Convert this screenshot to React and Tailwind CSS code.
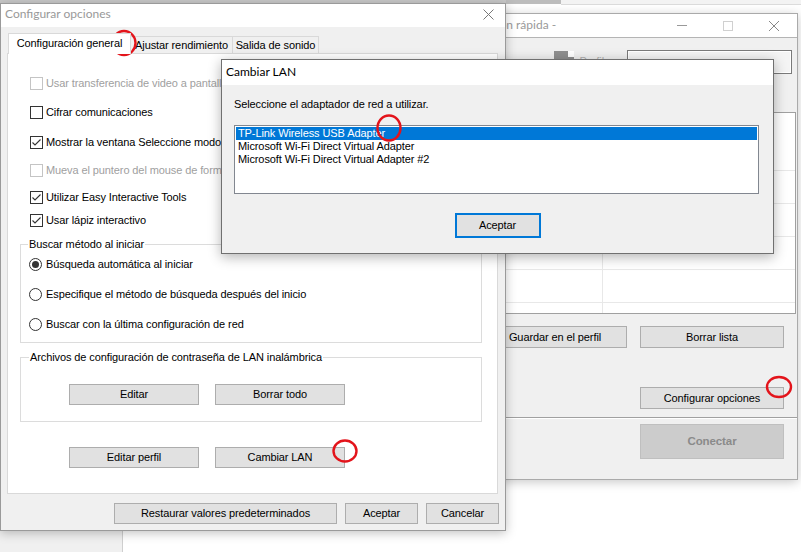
import React from 'react';

const title = "font-['Lato',sans-serif] text-[12px] tracking-normal";

function Btn({ className = '', children }) {
  return (
    <div className={`flex items-center justify-center border border-[#adadad] bg-[#e1e1e1] leading-none text-black ${className}`}>
      {children}
    </div>
  );
}

function Check({ checked, disabled, label, className = '' }) {
  return (
    <div className={`flex h-[13px] items-center ${className}`}>
      <span className={`flex h-[13px] w-[13px] shrink-0 items-center justify-center border bg-white ${disabled ? 'border-[#c4c4c4]' : 'border-[#333333]'}`}>
        {checked && (
          <svg width="11" height="11" viewBox="0 0 11 11">
            <path d="M1.5 5.5 L4 8 L9.5 2.5" stroke="#333" fill="none" strokeWidth="1.1" />
          </svg>
        )}
      </span>
      <span className={`ml-[3px] whitespace-nowrap leading-none ${disabled ? 'text-[#a0a0a0]' : 'text-black'}`}>{label}</span>
    </div>
  );
}

function Radio({ selected, label, className = '' }) {
  return (
    <div className={`flex h-[13px] items-center ${className}`}>
      <span className="flex h-[13px] w-[13px] shrink-0 items-center justify-center rounded-full border border-[#333333] bg-white">
        {selected && <span className="h-[7px] w-[7px] rounded-full bg-[#333333]" />}
      </span>
      <span className="ml-[4px] whitespace-nowrap leading-none text-black">{label}</span>
    </div>
  );
}

function Mark({ className, rx, ry }) {
  return (
    <svg className={`absolute ${className}`} width="28" height="30" viewBox="0 0 28 30">
      <ellipse cx="14" cy="15" rx={rx} ry={ry} stroke="#e3141b" strokeWidth="2.4" fill="none" />
    </svg>
  );
}

const checks = [
  { label: 'Usar transferencia de video a pantalla', disabled: true, mt: 'mt-[23px]' },
  { label: 'Cifrar comunicaciones', mt: 'mt-[16px]' },
  { label: 'Mostrar la ventana Seleccione modo', checked: true, mt: 'mt-[17px]' },
  { label: 'Mueva el puntero del mouse de forma', disabled: true, mt: 'mt-[15px]' },
  { label: 'Utilizar Easy Interactive Tools', checked: true, mt: 'mt-[14px]' },
  { label: 'Usar lápiz interactivo', checked: true, mt: 'mt-[10px]' },
];

const adapters = [
  'TP-Link Wireless USB Adapter',
  'Microsoft Wi-Fi Direct Virtual Adapter',
  'Microsoft Wi-Fi Direct Virtual Adapter #2',
];

export default function App() {
  return (
    <div className="relative h-[552px] w-[801px] overflow-hidden bg-white font-['Liberation_Sans',Arial,sans-serif] text-[11px] tracking-[-0.1px] text-black">
      {/* desktop strip behind */}
      <div className="absolute left-0 top-0 flex w-full items-start">
        <div className="h-[3px] w-[506px] bg-[#c9c9c9]" />
        <div className="h-[4px] w-[55px] bg-[#bdbdbd]" />
        <div className="h-[5px] flex-1 border-b border-[#dcdcdc] bg-[#f3f3f3]" />
      </div>
      <div className="absolute left-0 top-[531px] h-[21px] w-[123px] border-r border-[#cfcfcf] bg-[#f0f0f0]" />

      {/* back window: Conexión rápida */}
      <div className="absolute left-[280px] top-[13px] flex h-[467px] w-[518px] flex-col border border-[#aaaaaa] bg-[#f0f0f0] shadow-[0_2px_10px_rgba(0,0,0,0.22)]">
        <div className="flex h-[24px] items-center border-b border-[#b4b4b4] bg-white">
          <span className={`flex-1 pl-[182px] pb-[2px] text-[#999999] ${title}`}>Conexión rápida -</span>
          <div className="flex h-full w-[46px] items-center justify-center">
            <div className="h-px w-[10px] bg-[#999999]" />
          </div>
          <div className="flex h-full w-[46px] items-center justify-center">
            <div className="h-[10px] w-[10px] border border-[#d0d0d0]" />
          </div>
          <div className="flex h-full w-[46px] items-center justify-center">
            <svg width="10" height="10" viewBox="0 0 10 10">
              <path d="M0 0 L10 10 M10 0 L0 10" stroke="#888" strokeWidth="1" />
            </svg>
          </div>
        </div>
        <div className="mt-[12px] flex h-[24px] items-start justify-end pr-[5px]">
          <div className="mt-px flex h-[14px] w-[20px] justify-end bg-[#8f8f8f]">
            <div className="h-[6px] w-[6px] bg-white" />
          </div>
          <span className="ml-[6px] mr-[23px] mt-[3px] text-[#b0b0b0]">Perfil</span>
          <div className="h-[24px] w-[165px] border border-[#7a7a7a] bg-[#f4f4f4]">
            <div className="h-full w-full border border-white" />
          </div>
        </div>
        <div className="ml-auto mr-px mt-[38px] flex h-[202px] w-[495px] flex-col border border-[#a0a0a0] bg-white">
          <div className="flex h-[57px]">
            <div className="w-[301px] border-r border-[#e8e8e8]" />
            <div className="flex-1" />
          </div>
          {[0, 1, 2, 3].map((i) => (
            <div key={i} className="flex h-[33px] border-t border-[#e8e8e8]">
              <div className="w-[301px] border-r border-[#e8e8e8]" />
            </div>
          ))}
          <div className="flex flex-1 border-t border-[#e8e8e8]">
            <div className="w-[301px] border-r border-[#e8e8e8]" />
          </div>
        </div>
        <div className="mt-[12px] flex justify-end gap-[13px] pr-[13px]">
          <Btn className="h-[22px] w-[144px]">Guardar en el perfil</Btn>
          <Btn className="h-[22px] w-[144px]">Borrar lista</Btn>
        </div>
        <div className="mt-[39px] flex justify-end pr-[13px]">
          <Btn className="h-[22px] w-[144px]">Configurar opciones</Btn>
        </div>
        <div className="mt-[8px] h-[2px] border-b border-t border-b-white border-t-[#a0a0a0]" />
        <div className="mt-[5px] flex justify-end pr-[13px]">
          <div className="flex h-[35px] w-[144px] items-center justify-center border border-[#bfbfbf] bg-[#cccccc] text-[11.5px] font-bold text-[#8a8a8a]">
            Conectar
          </div>
        </div>
      </div>

      {/* Configurar opciones dialog */}
      <div className="absolute left-0 top-[3px] flex h-[528px] w-[506px] flex-col border border-[#9a9a9a] bg-[#f0f0f0] shadow-[0_2px_10px_rgba(0,0,0,0.25)]">
        <div className="flex h-[23px] items-center bg-white pb-[3px]">
          <span className={`flex-1 pl-[4px] text-[#999999] ${title}`}>Configurar opciones</span>
          <div className="flex w-[30px] items-center justify-center pr-[4px]">
            <svg width="11" height="11" viewBox="0 0 11 11">
              <path d="M0.5 0.5 L10.5 10.5 M10.5 0.5 L0.5 10.5" stroke="#777" strokeWidth="1" />
            </svg>
          </div>
        </div>
        <div className="mt-[6px] flex items-end pl-[7px]">
          <div className="relative z-10 -mb-px flex h-[21px] w-[123px] items-center justify-center whitespace-nowrap border border-b-0 border-[#d9d9d9] bg-white pb-[2px]">
            Configuración general
          </div>
          <div className="-ml-px flex h-[17px] w-[103px] items-center justify-center whitespace-nowrap border border-b-0 border-[#d9d9d9] bg-[#f0f0f0]">
            Ajustar rendimiento
          </div>
          <div className="-ml-px flex h-[17px] w-[87px] items-center justify-center whitespace-nowrap border border-b-0 border-[#d9d9d9] bg-[#f0f0f0]">
            Salida de sonido
          </div>
        </div>
        <div className="ml-[6px] flex h-[441px] w-[491px] flex-col border border-[#d9d9d9] bg-white">
          <div className="flex flex-col pl-[22px]">
            {checks.map((c) => (
              <Check key={c.label} className={c.mt} label={c.label} checked={c.checked} disabled={c.disabled} />
            ))}
          </div>
          <fieldset className="ml-[12px] mt-[9px] w-[462px] border border-[#dcdcdc] pb-[11px] pl-[8px]">
            <legend className="ml-[-1px] px-[1px] leading-[16px]">Buscar método al iniciar</legend>
            <Radio className="mt-[6px]" selected label="Búsqueda automática al iniciar" />
            <Radio className="mt-[17px]" label="Especifique el método de búsqueda después del inicio" />
            <Radio className="mt-[17px]" label="Buscar con la última configuración de red" />
          </fieldset>
          <fieldset className="ml-[12px] mt-[6px] w-[462px] border border-[#dcdcdc] pb-[16px] pl-[48px]">
            <legend className="ml-[-40px] px-[1px] leading-[16px]">Archivos de configuración de contraseña de LAN inalámbrica</legend>
            <div className="mt-[19px] flex gap-[16px]">
              <Btn className="h-[21px] w-[130px]">Editar</Btn>
              <Btn className="h-[21px] w-[130px]">Borrar todo</Btn>
            </div>
          </fieldset>
          <div className="ml-[61px] mt-[25px] flex gap-[16px]">
            <Btn className="h-[21px] w-[130px]">Editar perfil</Btn>
            <Btn className="h-[21px] w-[130px]">Cambiar LAN</Btn>
          </div>
        </div>
        <div className="mt-[9px] flex justify-end gap-[8px] pr-[6px]">
          <Btn className="h-[21px] w-[223px]">Restaurar valores predeterminados</Btn>
          <Btn className="h-[21px] w-[73px]">Aceptar</Btn>
          <Btn className="h-[21px] w-[73px]">Cancelar</Btn>
        </div>
      </div>

      {/* Cambiar LAN dialog */}
      <div className="absolute left-[221px] top-[59px] flex h-[195px] w-[553px] flex-col border border-[#707070] bg-[#f0f0f0] shadow-[0_3px_12px_rgba(0,0,0,0.3)]">
        <div className={`flex h-[25px] items-center bg-white pb-[1px] pl-[4px] ${title}`}>Cambiar LAN</div>
        <div className="mt-[12px] pl-[12px] leading-[15px]">Seleccione el adaptador de red a utilizar.</div>
        <div className="ml-[12px] mt-[13px] h-[69px] w-[525px] border border-[#828790] bg-white p-px">
          {adapters.map((a, i) => (
            <div
              key={a}
              className={`flex h-[13px] items-center pl-[2px] leading-none ${i === 0 ? 'bg-[#0078d7] text-white' : 'text-black'}`}
            >
              {a}
            </div>
          ))}
        </div>
        <div className="mt-[19px] flex justify-center">
          <div className="flex h-[25px] w-[86px] items-center justify-center border-2 border-[#0078d7] bg-[#e1e1e1]">
            Aceptar
          </div>
        </div>
      </div>

      {/* red annotation circles */}
      <Mark className="left-[110px] top-[28px]" rx={11.5} ry={12} />
      <Mark className="left-[375px] top-[113px]" rx={11.5} ry={12.5} />
      <Mark className="left-[331px] top-[436px]" rx={11.5} ry={10.5} />
      <Mark className="left-[765px] top-[372px]" rx={12} ry={10} />
    </div>
  );
}
